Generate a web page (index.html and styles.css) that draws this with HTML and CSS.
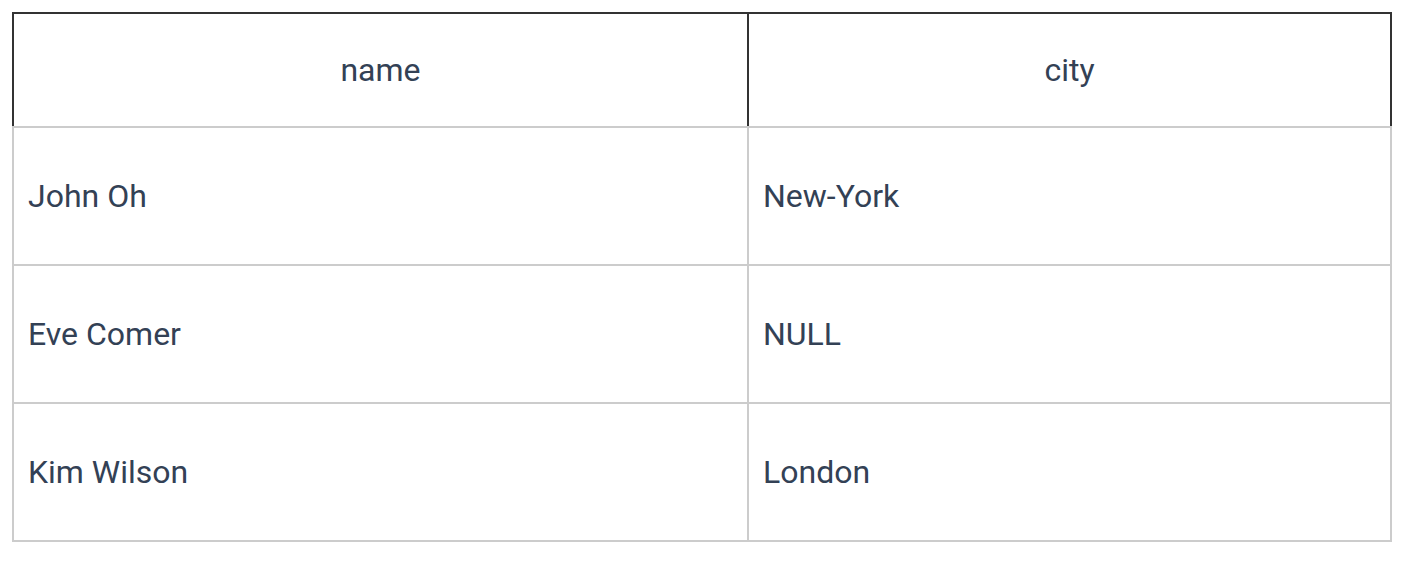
FILE: index.html
```html
<!DOCTYPE html>
<html>
<head>
<meta charset="utf-8">
<link rel="stylesheet" href="styles.css">
</head>
<body>
<table class="data">
  <colgroup>
    <col class="col-name">
    <col class="col-city">
  </colgroup>
  <thead>
    <tr>
      <th>name</th>
      <th>city</th>
    </tr>
  </thead>
  <tbody>
    <tr><td>John Oh</td><td>New-York</td></tr>
    <tr><td>Eve Comer</td><td>NULL</td></tr>
    <tr><td>Kim Wilson</td><td>London</td></tr>
  </tbody>
</table>
</body>
</html>
```
FILE: styles.css
```css
html, body {
  margin: 0;
  padding: 0;
  background: #ffffff;
}
body {
  padding: 12px;
  font-family: Roboto, "Liberation Sans", sans-serif;
  color: #334155;
}
.data {
  border-collapse: collapse;
  width: 1378px;
  table-layout: fixed;
  font-size: 32px;
}
.col-name { width: 735px; }
.col-city { width: 643px; }
.data th {
  font-weight: 400;
  text-align: center;
  height: 114px;
  padding: 0 14px;
  border: 2px solid #333333;
  border-bottom-color: #cccccc;
  box-sizing: border-box;
}
.data td {
  text-align: left;
  height: 138px;
  padding: 0 14px;
  border: 2px solid #cccccc;
  box-sizing: border-box;
}
```
